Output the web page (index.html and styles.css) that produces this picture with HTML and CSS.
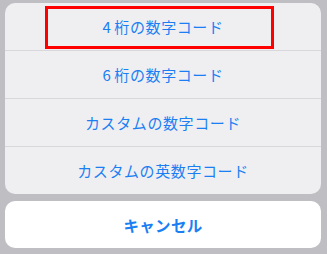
FILE: index.html
```html
<!DOCTYPE html>
<html lang="ja">
<head>
<meta charset="utf-8">
<link rel="stylesheet" href="styles.css">
</head>
<body>
<div class="sheet">
  <div class="group">
    <div class="row"><span class="num">4</span>桁の数字コード</div>
    <div class="row"><span class="num">6</span>桁の数字コード</div>
    <div class="row">カスタムの数字コード</div>
    <div class="row">カスタムの英数字コード</div>
  </div>
  <div class="cancel">キャンセル</div>
  <div class="highlight"></div>
</div>
</body>
</html>
```
FILE: styles.css
```css
html, body {
  margin: 0;
  padding: 0;
  background: #bebec3;
  width: 327px;
  height: 254px;
  overflow: hidden;
}
.sheet {
  position: relative;
  padding: 3px 6px 0 5px;
  display: flex;
  flex-direction: column;
  gap: 7px;
  font-family: "Noto Sans CJK JP", "Noto Sans", sans-serif;
}
.group {
  background: #efeff2;
  border-radius: 10px;
  overflow: hidden;
  display: flex;
  flex-direction: column;
}
.row {
  height: 47px;
  display: flex;
  align-items: center;
  justify-content: center;
  color: #1b7ff3;
  font-size: 15px;
  letter-spacing: 0.6px;
}
.num {
  margin-right: 3px;
}
.row + .row {
  border-top: 1px solid #d8d8dc;
}
.cancel {
  background: #ffffff;
  border-radius: 10px;
  height: 47px;
  display: flex;
  align-items: center;
  justify-content: center;
  color: #1b7ff3;
  font-size: 15.5px;
  font-weight: 700;
  letter-spacing: 0.3px;
}
.highlight {
  position: absolute;
  left: 45px;
  top: 6px;
  width: 223px;
  height: 37px;
  border: 3px solid #ff0000;
}
```
